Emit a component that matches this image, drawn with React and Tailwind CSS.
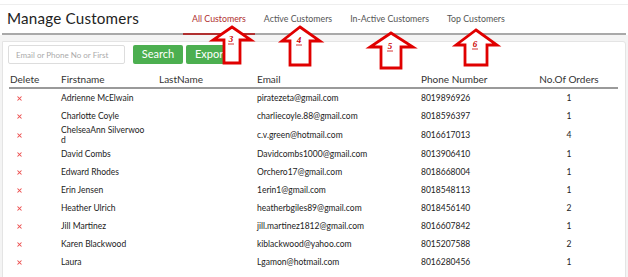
import React from 'react';

const tabs = ['All Customers', 'Active Customers', 'In-Active Customers', 'Top Customers'];

const customers = [
  { first: 'Adrienne McElwain', email: 'piratezeta@gmail.com', phone: '8019896926', orders: 1 },
  { first: 'Charlotte Coyle', email: 'charliecoyle.88@gmail.com', phone: '8018596397', orders: 1 },
  { first: 'ChelseaAnn Silverwoo\nd', email: 'c.v.green@hotmail.com', phone: '8016617013', orders: 4 },
  { first: 'David Combs', email: 'Davidcombs1000@gmail.com', phone: '8013906410', orders: 1 },
  { first: 'Edward Rhodes', email: 'Orchero17@gmail.com', phone: '8018668004', orders: 1 },
  { first: 'Erin Jensen', email: '1erin1@gmail.com', phone: '8018548113', orders: 1 },
  { first: 'Heather Ulrich', email: 'heatherbgiles89@gmail.com', phone: '8018456140', orders: 2 },
  { first: 'Jill Martinez', email: 'jill.martinez1812@gmail.com', phone: '8016607842', orders: 1 },
  { first: 'Karen Blackwood', email: 'kiblackwood@yahoo.com', phone: '8015207588', orders: 2 },
  { first: 'Laura', email: 'Lgamon@hotmail.com', phone: '8016280456', orders: 1 },
];

// callout arrows drawn over the screenshot
const arrows = [
  { n: '3', tip: [232, 27], head: [213, 251, 40], shaft: [224, 240, 63] },
  { n: '4', tip: [300, 27], head: [282, 320, 41], shaft: [290, 310, 65] },
  { n: '5', tip: [391, 33], head: [370, 413, 47], shaft: [381, 401, 68] },
  { n: '6', tip: [476, 30], head: [456, 497, 45], shaft: [465, 487, 65] },
];

const DeleteIcon = () => (
  <svg width="5" height="5" viewBox="0 0 5 5">
    <path d="M0.5 0.5L4.5 4.5M4.5 0.5L0.5 4.5" stroke="#ec4b4b" strokeWidth="1.05" />
  </svg>
);

const App = () => {
  return (
    <div className="relative w-[628px] h-[277px] overflow-hidden bg-white text-[#222] font-['Lato',sans-serif]">
      <div className="h-[5px] border-b border-[#eeeeee]" />

      {/* Header */}
      <div className="flex h-[30px] items-center border-b-2 border-[#a9a9a9] mx-[2px]">
        <h1 className="w-[181px] pl-[5px] text-[15.2px] leading-none text-[#222] tracking-[0.2px]">Manage Customers</h1>
        <div className="flex h-full">
          {tabs.map((t, i) => (
            <div
              key={t}
              className={
                i === 0
                  ? 'flex items-center px-[9px] text-[8.8px] text-[#b03030] border-b-2 border-[#b03030] -mb-[2px]'
                  : 'flex items-center px-[9px] text-[8.8px] text-[#555]'
              }
            >
              {t}
            </div>
          ))}
        </div>
      </div>

      <div className="bg-[#f4f4f4] px-[2px] pt-[6px] h-full">
        <div className="bg-white border border-[#e4e4e4] rounded-tr-[3px] h-full px-[5px] pt-[3px]">
          <div className="flex items-center">
            <div className="w-[117px] h-[19px] border border-[#dddddd] rounded-[2px] flex items-center pl-[7px] text-[8px] text-[#aaa]">
              Email or Phone No or First
            </div>
            <button className="ml-[8px] w-[50px] h-[19px] bg-[#4caf50] text-white text-[11px] rounded-[2px]">Search</button>
            <button className="ml-[3px] w-[50px] h-[19px] bg-[#4caf50] text-white text-[11px] rounded-[2px]">Export</button>
          </div>

          {/* Table */}
          <div className="mt-[8px] w-[609px] ml-[1px]">
            <div className="grid grid-cols-[52px_98px_98px_164px_99px_98px] h-[17px] items-center border-b-2 border-[#9a9a9a] text-[10px] text-[#333]">
              <div className="pl-[1px]">Delete</div>
              <div>Firstname</div>
              <div>LastName</div>
              <div>Email</div>
              <div>Phone Number</div>
              <div className="text-center">No.Of Orders</div>
            </div>
            {customers.map((c) => (
              <div
                key={c.phone}
                className="grid grid-cols-[52px_98px_98px_164px_99px_98px] min-h-[18px] items-center text-[8.5px] text-[#222]"
              >
                <div className="pl-[8px] flex items-center"><DeleteIcon /></div>
                <div className="leading-[10px] whitespace-pre-line">{c.first}</div>
                <div />
                <div>{c.email}</div>
                <div>{c.phone}</div>
                <div className="text-center">{c.orders}</div>
              </div>
            ))}
          </div>
        </div>
      </div>

      <svg className="absolute inset-0 pointer-events-none" width="628" height="277">
        {arrows.map((a) => {
          const [tx, ty] = a.tip;
          const [hl, hr, hy] = a.head;
          const [sl, sr, sb] = a.shaft;
          const pts = `${tx},${ty} ${hr},${hy} ${sr},${hy} ${sr},${sb} ${sl},${sb} ${sl},${hy} ${hl},${hy}`;
          const cx = (sl + sr) / 2;
          return (
            <g key={a.n}>
              <polygon points={pts} fill="white" stroke="#e00000" strokeWidth="2.8" strokeLinejoin="miter" />
              <text x={cx - 1} y={hy + 2} fontSize="9" fontStyle="italic" fontWeight="bold" fontFamily="Liberation Serif, serif" fill="#cc0000" textAnchor="middle">
                {a.n}
              </text>
              <line x1={cx - 4} x2={cx + 2} y1={hy + 4} y2={hy + 4} stroke="#cc0000" strokeWidth="0.8" />
            </g>
          );
        })}
      </svg>
    </div>
  );
};

export default App;
